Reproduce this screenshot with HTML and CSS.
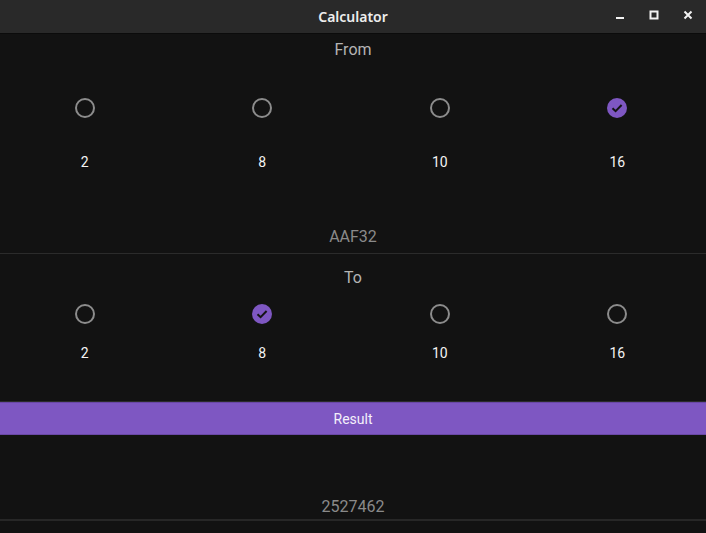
FILE: index.html
```html
<!DOCTYPE html>
<html lang="en">
<head>
    <meta charset="UTF-8">
    <meta name="viewport" content="width=device-width, initial-scale=1.0">
    <title>Calculator</title>
    <link rel="stylesheet" href="styles.css">
</head>
<body>
    <div class="titlebar">
        <div class="titlebar-title">Calculator</div>
        <div class="titlebar-buttons">
            <svg width="12" height="12" viewBox="0 0 12 12"><rect x="2" y="8" width="8" height="2" fill="#f2f2f2"/></svg>
            <svg width="12" height="12" viewBox="0 0 12 12"><rect x="2.5" y="2.5" width="7" height="7" fill="none" stroke="#f2f2f2" stroke-width="2"/></svg>
            <svg width="12" height="12" viewBox="0 0 12 12"><path d="M2.5 2.5 L9.5 9.5 M9.5 2.5 L2.5 9.5" stroke="#f2f2f2" stroke-width="2"/></svg>
        </div>
    </div>

    <div class="section">
        <div class="section-title">From</div>
        <div class="options options-from">
            <div class="option"><span class="radio"></span><span class="option-label">2</span></div>
            <div class="option"><span class="radio"></span><span class="option-label">8</span></div>
            <div class="option"><span class="radio"></span><span class="option-label">10</span></div>
            <div class="option">
                <svg class="radio-checked" width="22" height="22" viewBox="0 0 22 22"><circle cx="11" cy="11" r="10" fill="#7e57c2"/><path d="M6.5 11.2 L9.6 14.2 L15.6 8" fill="none" stroke="#141414" stroke-width="2"/></svg>
                <span class="option-label">16</span>
            </div>
        </div>
        <div class="value value-from">AAF32</div>
    </div>

    <div class="section">
        <div class="section-title section-title-to">To</div>
        <div class="options options-to">
            <div class="option"><span class="radio"></span><span class="option-label">2</span></div>
            <div class="option">
                <svg class="radio-checked" width="22" height="22" viewBox="0 0 22 22"><circle cx="11" cy="11" r="10" fill="#7e57c2"/><path d="M6.5 11.2 L9.6 14.2 L15.6 8" fill="none" stroke="#141414" stroke-width="2"/></svg>
                <span class="option-label">8</span>
            </div>
            <div class="option"><span class="radio"></span><span class="option-label">10</span></div>
            <div class="option"><span class="radio"></span><span class="option-label">16</span></div>
        </div>
    </div>

    <button class="result-button">Result</button>

    <div class="section">
        <div class="value value-result">2527462</div>
    </div>
</body>
</html>
```

FILE: styles.css
```css
html, body {
    margin: 0;
    padding: 0;
    background-color: #121212;
    font-family: Roboto, "Liberation Sans", sans-serif;
    overflow: hidden;
}

.titlebar {
    height: 33px;
    background-color: #292929;
    border-bottom: 1px solid #0b0b0b;
    display: flex;
    align-items: center;
    justify-content: center;
    position: relative;
}

.titlebar-title {
    color: #ededed;
    font-family: "Noto Sans", "DejaVu Sans", sans-serif;
    font-weight: 600;
    font-size: 14px;
}

.titlebar-buttons {
    position: absolute;
    right: 12px;
    top: 9px;
    display: flex;
    gap: 22px;
}

.section {
    border-bottom: 1px solid #2b2b2b;
}

.section-title {
    height: 30px;
    line-height: 32px;
    text-align: center;
    color: #b4b4b4;
    font-size: 16px;
}

.section-title-to {
    margin-top: 8px;
}

.options {
    display: grid;
    grid-template-columns: repeat(4, 1fr);
    margin: 0 0 0 -4px;
}

.options-from {
    padding-top: 34px;
}

.options-to {
    padding-top: 12px;
    padding-bottom: 39px;
}

.option {
    display: flex;
    flex-direction: column;
    align-items: center;
}

.radio {
    width: 16px;
    height: 16px;
    border: 2px solid #8c8c8c;
    border-radius: 50%;
}

.radio-checked {
    margin: -1px 0;
}

.options-from .option-label {
    margin-top: 33px;
}

.options-to .option-label {
    margin-top: 18px;
}

.option-label {
    height: 20px;
    line-height: 22px;
    color: #f4f4f4;
    font-size: 14px;
}

.value {
    height: 20px;
    line-height: 20px;
    text-align: center;
    color: #8a8a8a;
    font-size: 16px;
}

.value-from {
    margin-top: 55px;
    padding-bottom: 7px;
    line-height: 22px;
}

.value-result {
    margin-top: 62px;
    padding-bottom: 2px;
}

.section:has(.value-result) {
    border-bottom-width: 2px;
    border-bottom-color: #272727;
}

.result-button {
    display: block;
    width: 100%;
    height: 33px;
    margin: 0;
    background-color: #7e57c2;
    border: none;
    border-top: 1px solid #6a48a6;
    border-bottom: 1px solid #6a48a6;
    color: #f4f0fa;
    font-family: Roboto, "Liberation Sans", sans-serif;
    font-size: 14px;
}
```
